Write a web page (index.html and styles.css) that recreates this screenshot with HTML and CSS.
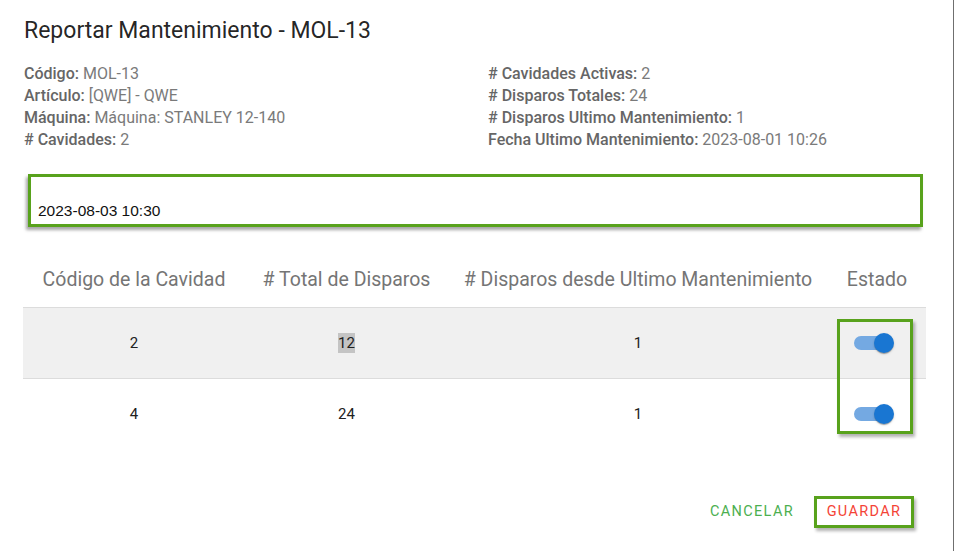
FILE: index.html
```html
<!DOCTYPE html>
<html lang="es">
<head>
<meta charset="utf-8">
<title>Reportar Mantenimiento - MOL-13</title>
<link rel="stylesheet" href="styles.css">
</head>
<body>
<div class="dialog">
  <h2 class="title">Reportar Mantenimiento - MOL-13</h2>
  <div class="info">
    <div class="info-col">
      <div><b>Código:</b> MOL-13</div>
      <div><b>Artículo:</b> [QWE] - QWE</div>
      <div><b>Máquina:</b> Máquina: STANLEY 12-140</div>
      <div><b># Cavidades:</b> 2</div>
    </div>
    <div class="info-col">
      <div><b># Cavidades Activas:</b> 2</div>
      <div><b># Disparos Totales:</b> 24</div>
      <div><b># Disparos Ultimo Mantenimiento:</b> 1</div>
      <div><b>Fecha Ultimo Mantenimiento:</b> 2023-08-01 10:26</div>
    </div>
  </div>
  <div class="date-box">
    <span class="date-text">2023-08-03 10:30</span>
  </div>
  <div class="table-wrap">
    <table class="cav-table">
      <colgroup>
        <col class="c1"><col class="c2"><col class="c3"><col class="c4">
      </colgroup>
      <thead>
        <tr>
          <th>Código de la Cavidad</th>
          <th># Total de Disparos</th>
          <th># Disparos desde Ultimo Mantenimiento</th>
          <th>Estado</th>
        </tr>
      </thead>
      <tbody>
        <tr class="hover">
          <td>2</td>
          <td><span class="sel">12</span></td>
          <td>1</td>
          <td><span class="switch"><span class="track"></span><span class="thumb"></span></span></td>
        </tr>
        <tr>
          <td>4</td>
          <td>24</td>
          <td>1</td>
          <td><span class="switch"><span class="track"></span><span class="thumb"></span></span></td>
        </tr>
      </tbody>
    </table>
    <div class="toggle-mark"></div>
  </div>
  <div class="actions">
    <button class="btn btn-cancel">Cancelar</button>
    <button class="btn btn-save">Guardar</button>
  </div>
</div>
</body>
</html>
```

FILE: styles.css
```css
html, body {
  margin: 0;
  padding: 0;
  background: #ffffff;
}
body {
  font-family: Roboto, "Liberation Sans", Arial, sans-serif;
  width: 954px;
  height: 551px;
  overflow: hidden;
}
.dialog {
  box-sizing: border-box;
  width: 954px;
  height: 551px;
  border-right: 1px solid #6f6f6f;
  padding: 0 0 0 24px;
}
.title {
  margin: 0;
  padding-top: 17px;
  font-size: 23px;
  line-height: 28px;
  font-weight: 400;
  color: rgba(0,0,0,0.87);
}
.info {
  display: flex;
  margin-top: 18px;
  font-size: 16px;
  line-height: 22px;
  color: #7a7a7a;
}
.info-col {
  width: 464px;
}
.info b {
  font-weight: 500;
  color: #666666;
}
.date-box {
  box-sizing: border-box;
  margin: 23px 0 0 4px;
  width: 895px;
  height: 53px;
  border: 3px solid #58a21c;
  box-shadow: -2px 3px 3px rgba(0,0,0,0.35);
  display: flex;
  align-items: flex-end;
  padding: 0 0 4px 7px;
}
.date-text {
  font-family: "Liberation Sans", Arial, sans-serif;
  font-size: 15.5px;
  line-height: 18px;
  color: #111;
}
.table-wrap {
  position: relative;
  margin: 24px 0 0 -1px;
  width: 903px;
}
.cav-table {
  width: 903px;
  border-collapse: collapse;
  table-layout: fixed;
}
.c1 { width: 222px; }
.c2 { width: 203px; }
.c3 { width: 380px; }
.c4 { width: 98px; }
.cav-table th {
  font-size: 19.5px;
  font-weight: 400;
  color: #757575;
  height: 56px;
  padding: 0;
  text-align: center;
  white-space: nowrap;
  vertical-align: middle;
  border-bottom: 1px solid #dcdcdc;
}
.cav-table td {
  font-size: 15px;
  color: #212121;
  height: 70px;
  padding: 0;
  text-align: center;
  border-bottom: 1px solid #dcdcdc;
}
.cav-table tbody tr:last-child td {
  border-bottom: none;
}
.cav-table tr.hover td {
  background: #f0f0f0;
}
.sel {
  background: #c4c4c4;
  padding: 1px 0;
}
.switch {
  position: relative;
  display: inline-block;
  width: 40px;
  height: 20px;
  vertical-align: middle;
  margin-right: 6px;
}
.track {
  position: absolute;
  left: 0;
  top: 3px;
  width: 31px;
  height: 14px;
  border-radius: 7px;
  background: #74a9e2;
}
.thumb {
  position: absolute;
  left: 20px;
  top: 0;
  width: 20px;
  height: 20px;
  border-radius: 50%;
  background: #1976d2;
  box-shadow: 0 2px 1px -1px rgba(0,0,0,0.2), 0 1px 1px 0 rgba(0,0,0,0.14), 0 1px 3px 0 rgba(0,0,0,0.12);
}
.toggle-mark {
  position: absolute;
  left: 814px;
  top: 68px;
  width: 76px;
  height: 115px;
  box-sizing: border-box;
  border: 3px solid #58a21c;
  box-shadow: 2px 3px 3px rgba(0,0,0,0.3);
}
.actions {
  display: flex;
  justify-content: flex-end;
  align-items: center;
  gap: 20px;
  margin-top: 47px;
  padding-right: 39px;
}
.btn {
  font-family: Roboto, "Liberation Sans", Arial, sans-serif;
  font-size: 14.5px;
  font-weight: 400;
  text-transform: uppercase;
  letter-spacing: 1.35px;
  background: transparent;
  border: none;
  padding: 0;
  line-height: 20px;
  cursor: pointer;
}
.btn-cancel {
  color: #4caf50;
}
.btn-save {
  color: #f44336;
  box-sizing: border-box;
  border: 3px solid #58a21c;
  box-shadow: 2px 3px 3px rgba(0,0,0,0.3);
  padding: 3px 9px;
  width: 100px;
  height: 32px;
}
```
